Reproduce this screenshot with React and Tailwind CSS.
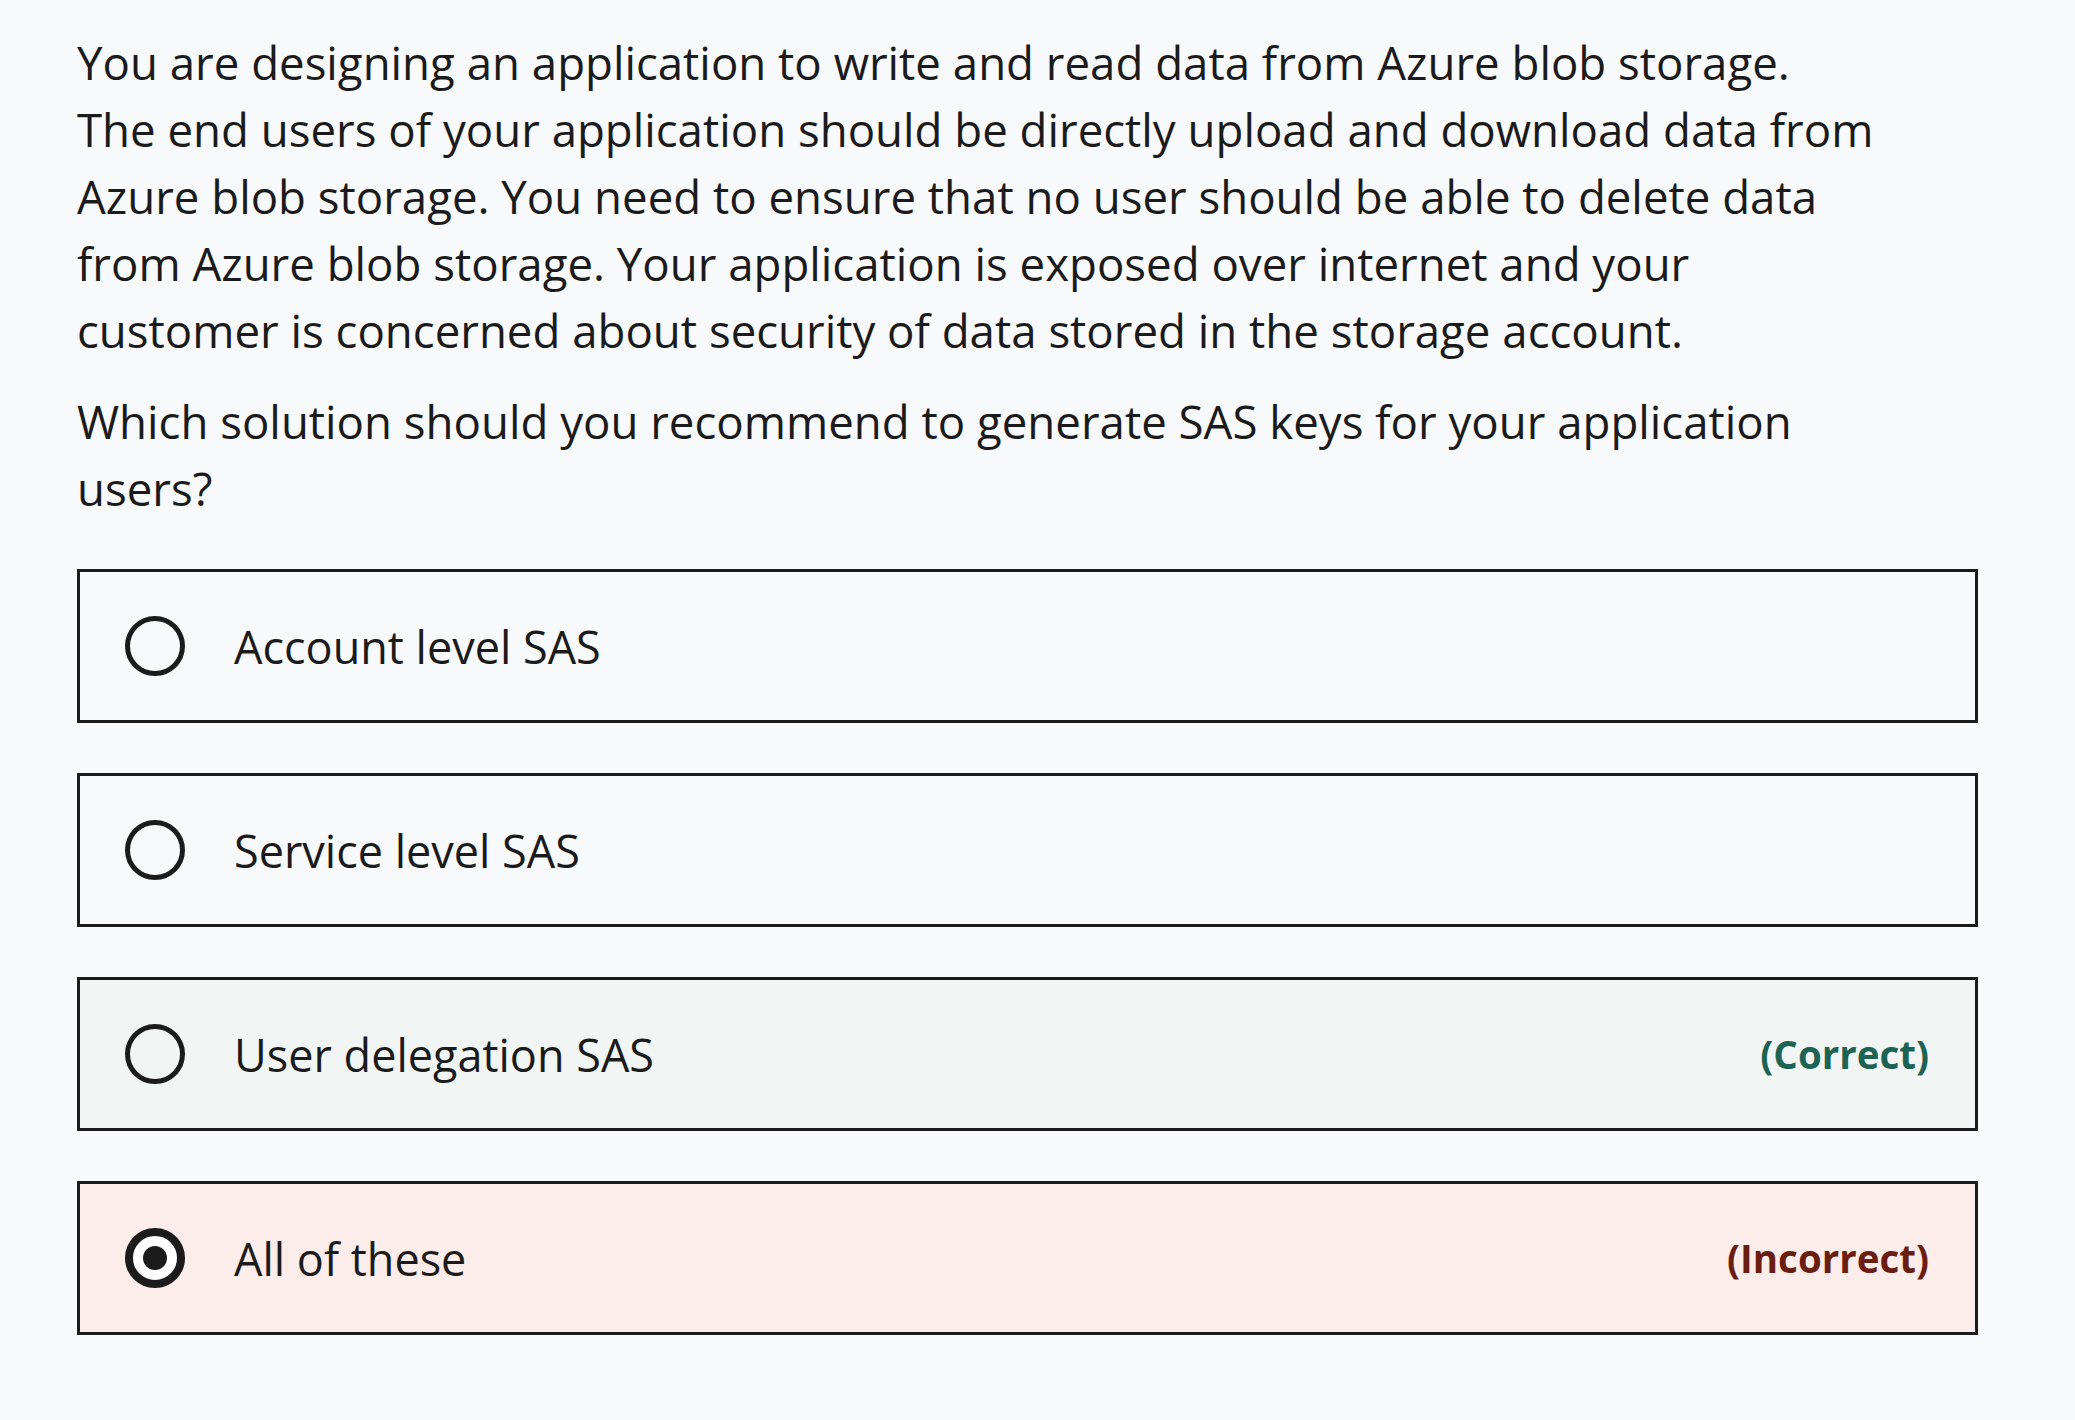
import React from "react";

function Radio({ checked }) {
  if (checked) {
    return (
      <span className="flex h-[60px] w-[60px] shrink-0 items-center justify-center rounded-full border-[8px] border-[#1b1b1b] bg-white">
        <span className="block h-[24px] w-[24px] rounded-full bg-[#1b1b1b]" />
      </span>
    );
  }
  return <span className="block h-[60px] w-[60px] shrink-0 rounded-full border-[5px] border-[#1b1b1b]" />;
}

function Option({ text, checked, tone, label }) {
  const bg = tone === "correct" ? "bg-[#f1f6f4]" : tone === "incorrect" ? "bg-[#fcecea]" : "bg-[#f8f9fa]";
  const labelColor = tone === "correct" ? "text-[#1d6354]" : "text-[#6a1e12]";
  return (
    <div className={`flex h-[154px] items-center border-[3px] border-[#1b1b1b] pl-[45px] pr-[46px] ${bg}`}>
      <Radio checked={checked} />
      <span className="ml-[49px] flex-1 text-[45px] leading-[67px]">{text}</span>
      {label && <span className={`text-[38.5px] font-bold leading-[67px] ${labelColor}`}>{label}</span>}
    </div>
  );
}

export default function App() {
  return (
    <div
      className="min-h-screen bg-[#f8f9fa] text-[#1b1b1b]"
      style={{ fontFamily: '"Open Sans", "Noto Sans", sans-serif' }}
    >
      <div className="w-[1978px] pl-[77px] pt-[29px]">
        <p className="text-[45.6px] leading-[67px]">
          You are designing an application to write and read data from Azure blob storage.
          <br />
          The end users of your application should be directly upload and download data from
          <br />
          Azure blob storage. You need to ensure that no user should be able to delete data
          <br />
          from Azure blob storage. Your application is exposed over internet and your
          <br />
          customer is concerned about security of data stored in the storage account.
        </p>
        <p className="mt-[24px] text-[45.6px] leading-[67px]">
          Which solution should you recommend to generate SAS keys for your application
          <br />
          users?
        </p>
        <div className="mt-[47px] flex flex-col gap-[50px]">
          <Option text="Account level SAS" />
          <Option text="Service level SAS" />
          <Option text="User delegation SAS" tone="correct" label="(Correct)" />
          <Option text="All of these" checked tone="incorrect" label="(Incorrect)" />
        </div>
      </div>
    </div>
  );
}
